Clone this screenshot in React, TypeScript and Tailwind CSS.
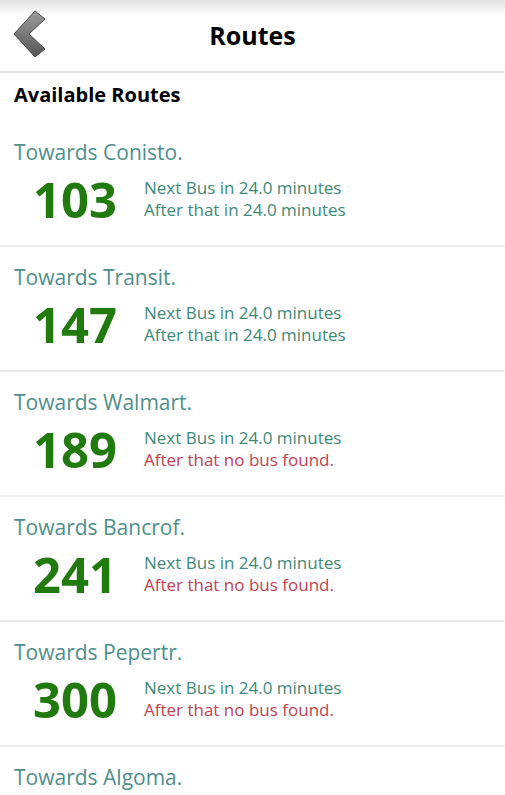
const routes = [
    { towards: 'Conisto.', number: '103', after: 'in 24.0 minutes' },
    { towards: 'Transit.', number: '147', after: 'in 24.0 minutes' },
    { towards: 'Walmart.', number: '189', after: null },
    { towards: 'Bancrof.', number: '241', after: null },
    { towards: 'Pepertr.', number: '300', after: null },
    { towards: 'Algoma.', number: '402', after: null },
];

function BackIcon() {
    return (
        <svg width="36" height="48" viewBox="0 0 36 48">
            <defs>
                <linearGradient id="chev" x1="0" y1="0" x2="0" y2="1">
                    <stop offset="0" stopColor="#9c9c9c" />
                    <stop offset="1" stopColor="#565656" />
                </linearGradient>
            </defs>
            <path
                d="M22 1 L32 9 L16 24 L32 39 L22 47 L1 24 Z"
                fill="url(#chev)"
                stroke="#4a4a4a"
                strokeWidth="1"
                strokeLinejoin="round"
            />
        </svg>
    );
}

export default function App() {
    return (
        <div className="h-[795px] w-[505px] overflow-hidden bg-white font-['Open_Sans',sans-serif]">
            <header className="relative flex h-[73px] items-center justify-center border-b-2 border-[#e3e3e3] bg-gradient-to-b from-[#e2e2e2] via-white via-[22%] to-white">
                <div className="absolute left-[13px] top-[10px]">
                    <BackIcon />
                </div>
                <h1 className="text-[25px] font-bold leading-none text-black">Routes</h1>
            </header>

            <h2 className="px-[14px] pt-[9px] pb-[14px] text-[20px] font-bold leading-[26px] text-black">
                Available Routes
            </h2>

            <ul>
                {routes.map((route, i) => (
                    <li
                        key={route.number}
                        className={`px-[14px] pt-[16px] pb-[24px] ${i > 0 ? 'border-t-2 border-[#ececec]' : ''}`}
                    >
                        <h3 className="text-[21px] leading-[28px] text-[#4e8f8b]">Towards {route.towards}</h3>
                        <div className="mt-[11px] flex items-center">
                            <div className="w-[130px] pl-[19px] text-[49px] font-bold leading-[44px] text-[#217a0e]">
                                {route.number}
                            </div>
                            <div className="text-[17px] leading-[22px]">
                                <p className="text-[#3d8a76]">Next Bus in 24.0 minutes</p>
                                {route.after ? (
                                    <p className="text-[#3d8a76]">After that {route.after}</p>
                                ) : (
                                    <p className="text-[#c4414f]">After that no bus found.</p>
                                )}
                            </div>
                        </div>
                    </li>
                ))}
            </ul>
        </div>
    );
}
